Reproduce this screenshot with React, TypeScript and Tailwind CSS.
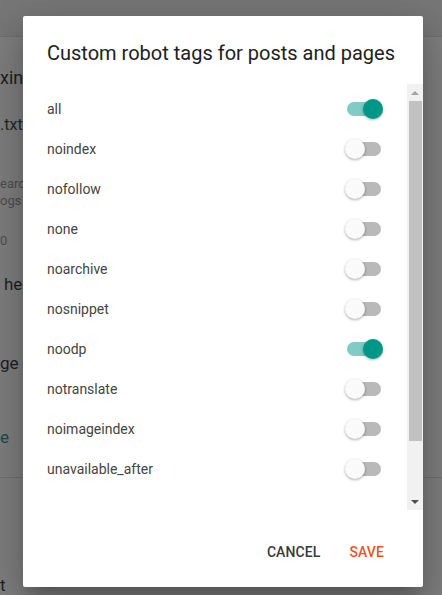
import React from "react";

const tags: { name: string; on: boolean }[] = [
  { name: "all", on: true },
  { name: "noindex", on: false },
  { name: "nofollow", on: false },
  { name: "none", on: false },
  { name: "noarchive", on: false },
  { name: "nosnippet", on: false },
  { name: "noodp", on: true },
  { name: "notranslate", on: false },
  { name: "noimageindex", on: false },
  { name: "unavailable_after", on: false },
];

function Toggle({ on }: { on: boolean }) {
  return (
    <div className="relative w-[38px] h-[20px] flex items-center">
      <div
        className={
          on
            ? "ml-[2px] w-[34px] h-[14px] rounded-full bg-[#80cbc4]"
            : "ml-[2px] w-[34px] h-[14px] rounded-full bg-[#b9b9b9]"
        }
      />
      <div
        className={
          on
            ? "absolute left-[18px] top-0 w-[20px] h-[20px] rounded-full bg-[#009688] shadow-[0_1px_3px_rgba(0,0,0,0.3)]"
            : "absolute left-0 top-0 w-[20px] h-[20px] rounded-full bg-[#fafafa] shadow-[0_1px_3px_rgba(0,0,0,0.35)]"
        }
      />
    </div>
  );
}

export default function App() {
  return (
    <div
      className="relative w-[442px] h-[595px] overflow-hidden bg-[#7f7f7f]"
      style={{ fontFamily: "Roboto, 'Noto Sans', sans-serif" }}
    >
      {/* dimmed page behind */}
      <div className="flex flex-col">
        <div className="h-[37px] bg-[#777777] border-b border-[#707070]" />
        <div className="h-[30px]" />
        <div className="h-[22px] leading-[22px] text-[18px] text-[#1f1f1f] whitespace-nowrap">xing</div>
        <div className="h-[25px]" />
        <div className="h-[22px] leading-[22px] text-[16px] text-[#262626] whitespace-nowrap">.txt</div>
        <div className="h-[39px]" />
        <div className="h-[17px] leading-[17px] text-[13px] text-[#4e4e4e] whitespace-nowrap">earch</div>
        <div className="h-[17px] leading-[17px] text-[13px] text-[#4e4e4e] whitespace-nowrap">ogs</div>
        <div className="h-[23px]" />
        <div className="h-[17px] leading-[17px] text-[13px] text-[#4e4e4e] whitespace-nowrap">0</div>
        <div className="h-[24px]" />
        <div className="h-[22px] leading-[22px] text-[17px] text-[#1f1f1f] whitespace-nowrap pl-[4px]">header</div>
        <div className="h-[57px]" />
        <div className="h-[22px] leading-[22px] text-[17px] text-[#1f1f1f] whitespace-nowrap">ge</div>
        <div className="h-[52px]" />
        <div className="h-[22px] leading-[22px] text-[17px] text-[#1c4a55] whitespace-nowrap">e</div>
        <div className="h-[30px] border-b border-[#707070]" />
        <div className="h-[96px]" />
        <div className="h-[22px] leading-[22px] text-[17px] text-[#1f1f1f] whitespace-nowrap">t</div>
      </div>

      {/* dialog */}
      <div className="absolute left-[23px] top-[16px] w-[400px] h-[571px] bg-white rounded-[2px] flex flex-col shadow-[0_11px_15px_-7px_rgba(0,0,0,0.2),0_24px_38px_3px_rgba(0,0,0,0.14),0_9px_46px_8px_rgba(0,0,0,0.12)]">
        <div className="pt-[21px] px-[24px] text-[20px] leading-[32px] text-[#212121] font-normal">
          Custom robot tags for posts and pages
        </div>
        <div className="mt-[15px] h-[426px] flex">
          <div className="flex-1 overflow-hidden pt-[5px] pl-[24px] pr-[24px]">
            {tags.map((t) => (
              <div key={t.name} className="h-[40px] flex items-center justify-between">
                <span className="text-[14px] text-[#444444]">{t.name}</span>
                <Toggle on={t.on} />
              </div>
            ))}
          </div>
          <div className="w-[16px] bg-[#f1f1f1] flex flex-col items-center">
            <div className="h-[17px] flex items-center justify-center">
              <div className="w-0 h-0 border-l-[4px] border-r-[4px] border-b-[4px] border-l-transparent border-r-transparent border-b-[#a3a3a3]" />
            </div>
            <div className="w-[13px] h-[340px] bg-[#c1c1c1]" />
            <div className="flex-1" />
            <div className="h-[17px] flex items-center justify-center">
              <div className="w-0 h-0 border-l-[4px] border-r-[4px] border-t-[4px] border-l-transparent border-r-transparent border-t-[#505050]" />
            </div>
          </div>
        </div>
        <div className="flex-1 flex items-end justify-end pb-[17px] pr-[31px] gap-[13px]">
          <button className="h-[36px] px-[8px] text-[14px] font-medium text-[#3a3a3a] tracking-[0.1px]">
            CANCEL
          </button>
          <button className="h-[36px] px-[8px] text-[14px] font-medium text-[#f4511e] tracking-[0.1px]">
            SAVE
          </button>
        </div>
      </div>
    </div>
  );
}
